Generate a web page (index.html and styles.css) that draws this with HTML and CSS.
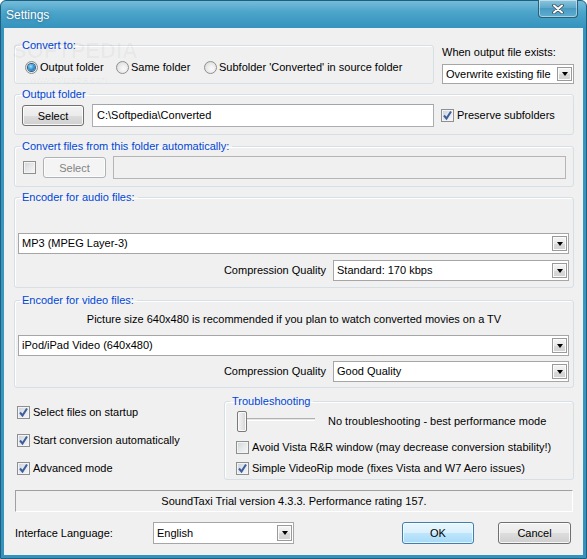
FILE: index.html
```html
<!DOCTYPE html>
<html>
<head>
<meta charset="utf-8">
<title>Settings</title>
<link rel="stylesheet" href="styles.css">
</head>
<body>
<div class="window">
  <div class="titlebar">
    <span class="title">Settings</span>
    <div class="close">
      <svg width="12" height="10" viewBox="0 0 12 10">
        <path d="M2 1.5 L10 8.5 M10 1.5 L2 8.5" stroke="#3c4a55" stroke-width="3.6" stroke-linecap="round"/>
        <path d="M2 1.5 L10 8.5 M10 1.5 L2 8.5" stroke="#ffffff" stroke-width="2" stroke-linecap="round"/>
      </svg>
    </div>
  </div>
  <div class="client">
    <div class="top-row">
      <fieldset class="group convert">
        <legend>Convert to:</legend>
        <div class="radios">
          <label class="opt o1"><span class="radio on"></span>Output folder</label>
          <label class="opt o2"><span class="radio"></span>Same folder</label>
          <label class="opt o3"><span class="radio"></span>Subfolder 'Converted' in source folder</label>
        </div>
      </fieldset>
      <div class="exists">
        <div class="exists-label">When output file exists:</div>
        <div class="combo c-exists"><span class="ctext">Overwrite existing file</span><span class="drop"></span></div>
      </div>
    </div>

    <fieldset class="group outfolder">
      <legend>Output folder</legend>
      <div class="frow r-out">
        <button class="btn sel">Select</button>
        <div class="textbox path">C:\Softpedia\Converted</div>
        <label class="chk preserve"><span class="cb on"><svg width="11" height="11" viewBox="0 0 11 11"><path d="M2 5.5 L4.5 8.5 L9 1.5" fill="none" stroke="#3d5d9c" stroke-width="2"/></svg></span>Preserve subfolders</label>
      </div>
    </fieldset>

    <fieldset class="group autof">
      <legend>Convert files from this folder automatically:</legend>
      <div class="frow r-auto">
        <span class="cb"></span>
        <button class="btn sel2" disabled>Select</button>
        <div class="textbox dis auto-path"></div>
      </div>
    </fieldset>

    <fieldset class="group audio">
      <legend>Encoder for audio files:</legend>
      <div class="combo enc a-enc"><span class="ctext">MP3 (MPEG Layer-3)</span><span class="drop"></span></div>
      <div class="q-row">
        <span class="q-label">Compression Quality</span>
        <div class="combo qcombo"><span class="ctext">Standard: 170 kbps</span><span class="drop"></span></div>
      </div>
    </fieldset>

    <fieldset class="group video">
      <legend>Encoder for video files:</legend>
      <div class="hint">Picture size 640x480 is recommended if you plan to watch converted movies on a TV</div>
      <div class="combo enc v-enc"><span class="ctext">iPod/iPad Video (640x480)</span><span class="drop"></span></div>
      <div class="q-row v-q">
        <span class="q-label">Compression Quality</span>
        <div class="combo qcombo"><span class="ctext">Good Quality</span><span class="drop"></span></div>
      </div>
    </fieldset>

    <div class="bottom">
      <div class="checks">
        <label class="chk"><span class="cb on"><svg width="11" height="11" viewBox="0 0 11 11"><path d="M2 5.5 L4.5 8.5 L9 1.5" fill="none" stroke="#3d5d9c" stroke-width="2"/></svg></span>Select files on startup</label>
        <label class="chk"><span class="cb on"><svg width="11" height="11" viewBox="0 0 11 11"><path d="M2 5.5 L4.5 8.5 L9 1.5" fill="none" stroke="#3d5d9c" stroke-width="2"/></svg></span>Start conversion automatically</label>
        <label class="chk"><span class="cb on"><svg width="11" height="11" viewBox="0 0 11 11"><path d="M2 5.5 L4.5 8.5 L9 1.5" fill="none" stroke="#3d5d9c" stroke-width="2"/></svg></span>Advanced mode</label>
      </div>
      <fieldset class="group trouble">
        <legend>Troubleshooting</legend>
        <div class="slider-row">
          <div class="slider"><span class="thumb"></span><span class="track"></span></div>
          <span class="slider-text">No troubleshooting - best performance mode</span>
        </div>
        <label class="chk t1"><span class="cb"></span>Avoid Vista R&amp;R window (may decrease conversion stability!)</label>
        <label class="chk t2"><span class="cb on"><svg width="11" height="11" viewBox="0 0 11 11"><path d="M2 5.5 L4.5 8.5 L9 1.5" fill="none" stroke="#3d5d9c" stroke-width="2"/></svg></span>Simple VideoRip mode (fixes Vista and W7 Aero issues)</label>
      </fieldset>
    </div>

    <div class="status">SoundTaxi Trial version 4.3.3. Performance rating 157.</div>

    <div class="footer">
      <span class="lang-label">Interface Language:</span>
      <div class="combo lang"><span class="ctext">English</span><span class="drop"></span></div>
      <span class="spacer"></span>
      <button class="btn ok">OK</button>
      <button class="btn cancel">Cancel</button>
    </div>

    <div class="wm wm1">SOFTPEDIA<sup>™</sup></div>
    <div class="wm wm2">www.softpedia.com</div>
  </div>
</div>
</body>
</html>
```

FILE: styles.css
```css
* { box-sizing: border-box; }
html, body { margin: 0; padding: 0; }
body {
  width: 587px;
  height: 559px;
  overflow: hidden;
  font-family: "Liberation Sans", Arial, sans-serif;
  font-size: 11px;
  line-height: 13px;
  color: #000;
  background: #ffffff;
}

.window {
  width: 587px;
  height: 559px;
  display: flex;
  flex-direction: column;
  background: linear-gradient(to bottom, #74bcda 0px, #4aa3c9 12px, #3593bd 27px, #3a97c0 60%, #3592bc 100%);
  border: 1px solid #1f5e7e;
  border-radius: 6px 6px 0 0;
  padding: 0 3px 3px 3px;
}

.titlebar {
  height: 27px;
  display: flex;
  align-items: flex-start;
  flex-shrink: 0;
}
.title {
  color: #ffffff;
  font-size: 12px;
  padding-left: 2px;
  margin-top: 8px;
  text-shadow: 0 0 3px rgba(20, 60, 90, 0.6);
}
.close {
  margin-left: auto;
  margin-right: 5px;
  margin-top: -1px;
  width: 40px;
  height: 18px;
  border: 1px solid #2b5f7a;
  border-top: none;
  border-radius: 0 0 4px 4px;
  background: linear-gradient(to bottom, #8cc6de, #5aa6c9 50%, #4a9bc2 50%, #5eaed0);
  box-shadow: inset 0 0 0 1px rgba(255, 255, 255, 0.45);
  display: flex;
  align-items: center;
  justify-content: center;
}

.client {
  flex: 1;
  background: #f0f0f0;
  padding: 0 9px 0 10px;
  display: flex;
  flex-direction: column;
  position: relative;
}

/* group boxes */
.group {
  margin: 0;
  padding: 0;
  min-width: 0;
  border: 1px solid #d5dfe5;
  border-radius: 3px;
  box-shadow: inset 1px 1px 0 #ffffff;
}
.group > legend {
  color: #0046d5;
  padding: 0 3px 0 2px;
  margin-left: 5px;
  line-height: 13px;
  height: 13px;
}

/* top row */
.top-row {
  display: flex;
  justify-content: space-between;
  margin-top: 11px;
  height: 45px;
  flex-shrink: 0;
}
.convert { width: 420px; height: 45px; }
.radios {
  display: flex;
  align-items: center;
  height: 14px;
  margin-top: 8px;
  padding-left: 10px;
}
.opt { display: flex; align-items: center; white-space: nowrap; }
.o1 { width: 91px; }
.o2 { width: 88px; }
.radio {
  width: 13px;
  height: 13px;
  border-radius: 50%;
  border: 1px solid #8e8f8f;
  background: radial-gradient(circle at 60% 60%, #fafafa 0%, #e8e8e8 55%, #cfcfcf 100%);
  margin-right: 2px;
  display: inline-flex;
  align-items: center;
  justify-content: center;
  flex-shrink: 0;
}
.radio.on::after {
  content: "";
  width: 7px;
  height: 7px;
  border-radius: 50%;
  background: radial-gradient(circle at 40% 35%, #a6e1fb 0%, #3a9ad8 45%, #1a5d97 100%);
  box-shadow: 0 0 0 1px #2a5b86;
}

.exists { width: 132px; }
.exists-label { margin-top: 7px; height: 13px; white-space: nowrap; }
.c-exists { margin-top: 5px; height: 20px; }

/* combos */
.combo {
  display: flex;
  align-items: center;
  background: #ffffff;
  border: 1px solid #a6a6a6;
  padding: 0 1px 0 2px;
}
.ctext { flex: 1; white-space: nowrap; overflow: hidden; padding-left: 1px; }
.drop {
  width: 15px;
  height: calc(100% - 4px);
  border: 1px solid #9a9a9a;
  background: linear-gradient(to bottom, #f6f6f6 0%, #e8e8e8 50%, #d9d9d9 51%, #d2d2d2 100%);
  box-shadow: inset 0 0 0 1px #fbfbfb;
  display: flex;
  align-items: center;
  justify-content: center;
  flex-shrink: 0;
}
.drop::after {
  content: "";
  width: 0;
  height: 0;
  border-left: 3.5px solid transparent;
  border-right: 3.5px solid transparent;
  border-top: 4px solid #000;
}

/* buttons */
.btn {
  font-family: inherit;
  font-size: 11px;
  color: #000;
  padding: 0;
  border: 1px solid #707070;
  border-radius: 3px;
  background: linear-gradient(to bottom, #f2f2f2 0%, #ebebeb 50%, #dddddd 51%, #cfcfcf 100%);
  box-shadow: inset 0 0 0 1px rgba(255, 255, 255, 0.8);
  flex-shrink: 0;
}
.btn:disabled {
  color: #838383;
  border-color: #adb2b5;
  background: #f4f4f4;
  box-shadow: inset 0 0 0 1px #fcfcfc;
}

/* textboxes */
.textbox {
  background: #ffffff;
  border: 1px solid #abadb3;
  border-top-color: #a0a4ab;
  padding: 0 0 0 4px;
  display: flex;
  align-items: center;
  white-space: nowrap;
  flex-shrink: 0;
}
.textbox.dis { background: #f0f0f0; border-color: #b5b5b5; }

/* checkboxes */
.chk { display: flex; align-items: center; white-space: nowrap; height: 16px; }
.cb {
  width: 13px;
  height: 13px;
  border: 1px solid #8e8f8f;
  background: linear-gradient(135deg, #cfd3d8 0%, #e4e6e8 45%, #f7f7f7 100%);
  box-shadow: inset 0 0 0 1px #f4f4f4;
  margin-right: 3px;
  display: inline-flex;
  align-items: center;
  justify-content: center;
  flex-shrink: 0;
}
.cb.on { background: linear-gradient(135deg, #c9d1dc 0%, #e2e6eb 45%, #f5f6f7 100%); }
.cb svg { display: block; }

/* output folder */
.outfolder { margin-top: 4px; height: 47px; flex-shrink: 0; }
.frow { display: flex; align-items: center; height: 23px; margin-top: 3px; }
.r-out { padding-left: 7px; }
.sel { width: 62px; height: 21px; }
.path { width: 342px; height: 23px; margin-left: 8px; }
.preserve { margin-left: 7px; }

/* auto convert */
.autof { margin-top: 5px; height: 47px; flex-shrink: 0; }
.r-auto { padding-left: 8px; }
.r-auto .cb { margin-right: 0; }
.sel2 { width: 63px; height: 21px; margin-left: 7px; }
.auto-path { width: 453px; height: 23px; margin-left: 7px; }

/* encoders */
.audio { margin-top: 4px; height: 97px; flex-shrink: 0; }
.enc { height: 21px; margin: 0 4px 0 3px; }
.a-enc { margin-top: 29px; }
.q-row {
  display: flex;
  justify-content: flex-end;
  align-items: center;
  margin: 6px 4px 0 0;
  height: 21px;
}
.q-label { white-space: nowrap; }
.qcombo { width: 236px; height: 21px; margin-left: 7px; }

.video { margin-top: 6px; height: 94px; flex-shrink: 0; }
.hint { text-align: center; margin-top: 6px; height: 13px; white-space: nowrap; }
.v-enc { margin-top: 9px; }
.v-q { margin-top: 5px; }

/* bottom */
.bottom {
  display: flex;
  margin-top: 7px;
  height: 85px;
  flex-shrink: 0;
}
.checks {
  flex: 1;
  display: flex;
  flex-direction: column;
  gap: 12px;
  padding: 9px 0 0 3px;
}
.trouble { width: 350px; height: 85px; }
.slider-row {
  display: flex;
  align-items: center;
  height: 21px;
  margin-top: 3px;
  padding-left: 12px;
}
.slider { display: flex; width: 78px; height: 21px; }
.thumb {
  width: 10px;
  height: 21px;
  border: 1px solid #7a7a7a;
  border-radius: 2px;
  background: linear-gradient(to right, #f4f4f4 0%, #e6e6e6 50%, #d4d4d4 100%);
  box-shadow: inset 0 0 0 1px #fafafa;
  flex-shrink: 0;
}
.track {
  flex: 1;
  height: 3px;
  margin-top: 7px;
  border-top: 1px solid #b0b0b0;
  border-bottom: 1px solid #ffffff;
  background: #e6e6e6;
}
.slider-text { margin-left: 13px; white-space: nowrap; }
.t1 { margin-top: 7px; padding-left: 11px; }
.t2 { margin-top: 5px; padding-left: 11px; }

/* status */
.status {
  margin: 10px 1px 0 1px;
  height: 22px;
  border: 1px solid #ffffff;
  border-top-color: #a0a0a0;
  border-left-color: #a0a0a0;
  display: flex;
  align-items: center;
  justify-content: center;
  white-space: nowrap;
  flex-shrink: 0;
}

/* footer */
.footer {
  display: flex;
  align-items: center;
  margin-top: 10px;
  height: 22px;
  flex-shrink: 0;
}
.lang-label { width: 139px; padding-left: 1px; white-space: nowrap; }
.lang { width: 141px; height: 22px; }
.spacer { flex: 1; }
.ok {
  width: 72px;
  height: 22px;
  border-color: #3c7fb1;
  background: linear-gradient(to bottom, #eaf6fd 0%, #d9f0fc 50%, #bee6fd 51%, #a7d9f5 100%);
  box-shadow: inset 0 0 0 1px rgba(255, 255, 255, 0.7);
}
.cancel { width: 73px; height: 22px; margin-left: 24px; margin-right: 3px; }

/* watermark overlay */
.wm {
  position: absolute;
  pointer-events: none;
  white-space: nowrap;
  color: rgba(0, 0, 0, 0.03);
}
.wm1 {
  left: 8px;
  top: 14px;
  font-size: 22px;
  line-height: 18px;
  font-weight: bold;
  letter-spacing: 0;
}
.wm1 sup { font-size: 7px; line-height: 7px; vertical-align: top; }
.wm2 {
  left: 26px;
  top: 48px;
  font-size: 9px;
  line-height: 9px;
  color: rgba(0, 0, 0, 0.05);
}
```
